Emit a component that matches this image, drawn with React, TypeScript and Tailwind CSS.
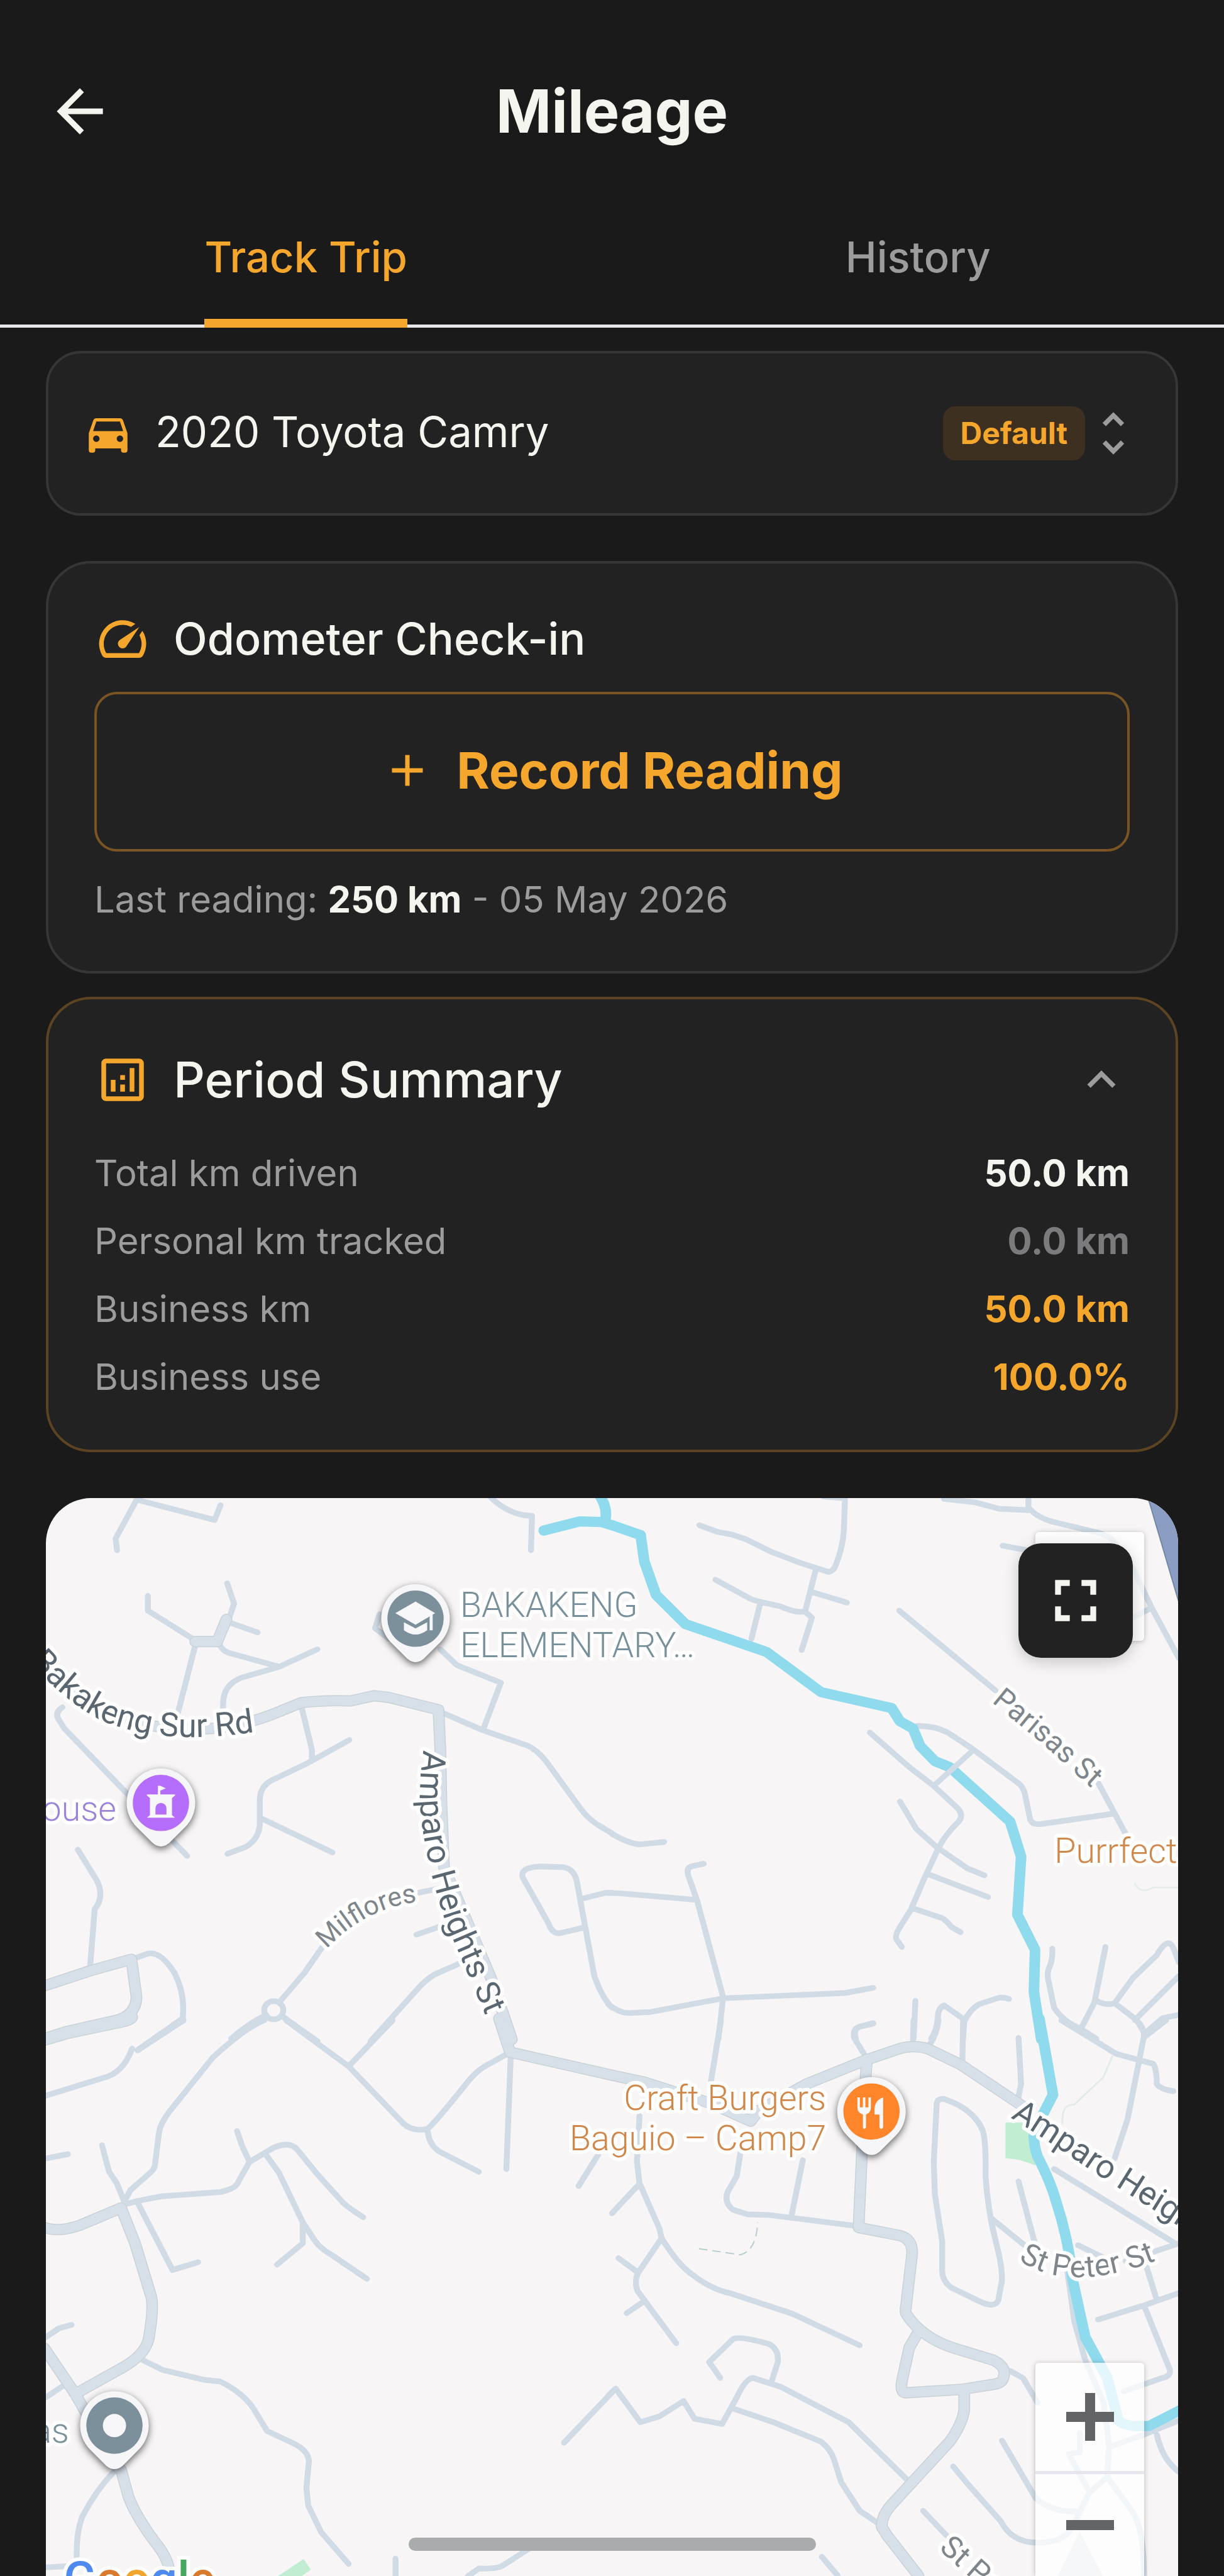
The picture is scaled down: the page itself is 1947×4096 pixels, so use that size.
import { useState } from "react";
import {
  MdAdd,
  MdArrowBack,
  MdDirectionsCar,
  MdFullscreen,
  MdKeyboardArrowDown,
  MdKeyboardArrowUp,
  MdOutlineAnalytics,
  MdSpeed,
  MdUnfoldMore,
} from "react-icons/md";

type Tile = {
  transform: string;
  minor: string[];
  major: string[];
  route: string[];
};

const tiles: Tile[] = [
  {
    transform: "translate(60 2430) scale(.5995 .574)",
    minor: [
      "M272 35 L215 145 L219 178 M275 35 L485 92 L501 50",
      "M1238 28 Q1290 80 1350 80 L1347 178",
      "M303 308 V350 L430 433 M519 272 L538 330 L525 370 M520 382 L602 412",
      "M500 450 Q510 468 530 472 L655 508",
      "M765 460 L660 510 L560 540 Q508 560 508 615 V650 M433 445 L385 640",
      "M70 625 Q48 640 60 660 L75 685 L410 1048",
      "M112 1030 L165 1120 Q185 1165 158 1200 L145 1370",
      "M265 1340 L300 1327 Q335 1315 375 1380 Q405 1440 398 1510 L275 1600",
      "M722 625 L750 745 V775 M852 718 L740 783 L650 828 Q608 845 608 890 V960 Q605 1000 570 1022 L520 1042",
      "M610 940 L806 1038 M935 360 L922 400 L960 430",
      "M1100 460 L1145 505 L1265 555 L1218 685",
      "M1105 640 L1215 690 L1340 735 Q1370 750 1400 795 L1480 910 Q1500 940 1530 960 L1570 985",
      "M1030 1155 L1100 1140 M1035 1272 L1110 1245 M1150 1355 L1085 1385 Q1060 1400 1035 1430 L910 1575",
      "M780 1305 L730 1380 L665 1460 M672 1487 A26 26 0 1 1 620 1487 A26 26 0 1 1 672 1487",
      "M625 1500 Q570 1530 530 1568 M670 1505 L765 1575",
      "M1375 1078 L1435 1080 Q1465 1085 1472 1120 L1495 1250 L1520 1390 Q1540 1450 1568 1480",
      "M1375 1078 Q1315 1080 1325 1110 L1395 1240 Q1405 1270 1425 1268 L1490 1252 M1485 1170 L1550 1153 H1568",
    ],
    major: [
      "M40 505 Q100 570 150 620 Q300 700 480 685 Q560 680 655 640 L720 612 Q790 604 855 607 L920 592 L960 597 L1095 632 L1100 745 L1103 900 L1110 1080 L1240 1400 L1295 1570",
      "M432 438 H492 L517 375",
      "M20 1418 L145 1375 L258 1342 L272 1450 Q270 1500 220 1515 L80 1548 L20 1568",
    ],
    route: ["M1382 122 L1480 96 L1540 98 L1568 107 M1530 15 Q1560 60 1548 98"],
  },
  {
    transform: "translate(1000 2430) scale(.5995 .574)",
    minor: [
      "M238 107 L285 125 L325 133 L365 147 L435 183 L510 213 L590 240 Q600 240 608 225 Q630 170 632 120 L635 30 L575 25",
      "M282 262 L375 315 Q390 322 405 325 L460 338 Q500 358 525 352 L545 370 L517 462",
      "M405 325 L380 430 M555 235 L527 350 M545 297 L640 327",
      "M905 32 L990 42 L1055 60 L1135 64 V30 M1140 62 Q1160 85 1200 97 L1325 128 Q1350 135 1365 150 L1420 230 L1470 340 L1545 485",
      "M1065 165 L1130 178 M1420 370 L1465 345 M783 350 L1045 577 M1320 830 L1400 985",
      "M832 678 Q880 678 915 697 L985 745 L1110 843 Q1120 852 1125 870 L1140 945 Q1145 960 1170 957 L1365 928",
      "M703 697 L810 795 L875 847 L940 910 Q960 930 945 950 Q910 985 890 1025 L850 1115 L815 1200 L785 1250 Q770 1275 775 1285 L790 1307",
      "M785 893 L830 972 L885 1023 L968 1083 L1015 1103",
      "M862 1100 L1025 1165 M820 1197 L900 1225 Q915 1235 925 1250 L950 1265",
      "M0 985 Q50 1015 78 1015 L142 1008",
      "M250 1070 L215 1078 Q200 1085 210 1110 L232 1175 L303 1450 L290 1568 M-10 1153 L30 1155 L230 1173",
      "M-10 1470 Q20 1495 45 1495 L105 1492 L303 1453 L635 1438 L712 1423",
      "M827 1460 L822 1568 M1082 1455 Q1065 1448 1050 1453 L1000 1470 Q975 1485 960 1520 L957 1568",
      "M962 1515 L905 1473 Q888 1480 888 1510 Q885 1545 870 1568 M712 1525 L680 1532 Q655 1540 665 1568",
      "M1200 1312 Q1202 1345 1190 1370 Q1185 1385 1190 1405 L1205 1480 Q1230 1520 1278 1540 L1320 1568",
      "M1345 1307 L1315 1465 L1278 1540 M1320 1460 Q1345 1475 1370 1467 L1420 1395 L1485 1330 Q1515 1275 1530 1310 L1545 1350",
      "M1370 1467 L1430 1515 L1450 1550 M1425 1515 L1545 1390 M1450 1555 L1500 1510 L1545 1500",
    ],
    major: [],
    route: [
      "M0 107 L78 135 L88 210 L120 305 L200 388 L422 468 L570 582 L762 627 L785 665 L820 685 L840 735 L880 778 L920 795 L1085 950 L1115 1050 L1105 1215 L1153 1315 L1150 1435 L1170 1570",
    ],
  },
  {
    transform: "translate(60 3300) scale(.5995 .5784)",
    minor: [
      "M400 0 L275 85 M260 80 Q235 150 180 163 L25 213 M25 390 L85 378 M178 353 L197 427 L218 460 L240 515",
      "M620 0 Q570 20 480 105 L360 260 Q335 295 333 320 L322 410 Q320 420 310 430 L255 480 L235 520",
      "M240 520 L275 510 L340 497 L500 485 Q545 475 550 455 L580 400 L645 360 Q690 340 710 365 L765 435 L835 515 Q850 530 890 556",
      "M546 313 L560 355 L580 400 M625 380 L660 430 L725 570 L760 625 Q775 645 800 660 L900 730 M725 570 V630 L655 690",
      "M275 515 L370 705 L440 683",
      "M680 0 L850 130 L1000 292 Q1025 315 1065 307 Q1085 290 1170 180 Q1200 140 1230 125 L1290 90",
      "M970 0 L850 130 M1065 310 Q1070 355 1100 372 L1205 428 M1292 100 L1280 420 M1530 380 L1477 468",
      "M95 860 L60 870 L25 895 M25 1065 L75 1030",
      "M290 960 L345 988 L455 1015 L500 1020 Q560 1050 590 1095 L628 1160 L700 1195 Q740 1215 742 1245 L735 1320 L740 1370 L775 1445 L850 1535",
      "M210 1275 Q160 1330 125 1400 Q105 1450 110 1540 M20 1545 L110 1540",
      "M978 1520 V1580 M1355 1483 L1270 1540 Q1255 1550 1205 1548 L1175 1570 M1575 1043 L1437 1193",
    ],
    major: [
      "M25 55 L80 38 L230 5 Q255 0 260 -8",
      "M20 585 Q60 600 120 578 L230 530 L268 630 L312 780 Q320 810 305 900 Q295 945 235 980 L105 1055",
      "M20 925 L105 1055 L130 1100 L210 1250 L230 1270 L250 1345 Q270 1400 320 1470 Q360 1520 362 1560",
      "M1260 -5 L1290 90 L1568 155",
    ],
    route: [],
  },
  {
    transform: "translate(1000 3300) scale(.5995 .5784)",
    minor: [
      "M297 0 L270 170 M75 270 L68 400 L75 460 L130 590 L135 615 Q180 690 215 715 Q270 760 320 770 L490 828 L675 918",
      "M0 545 L72 465 M132 620 L70 715 Q60 740 70 765 L175 912 M18 672 L68 710 M85 795 L40 827",
      "M350 375 L340 440 L315 485 Q305 515 330 535 L370 548 L430 550 L660 580 M520 395 L490 548",
      "M712 8 L675 18 Q655 25 660 50 L690 100 M822 0 L820 70 M890 0 Q885 40 865 70 M957 0 L955 120",
      "M905 222 Q985 250 1010 310 Q1020 340 1018 440 Q1025 540 1045 620 Q1070 720 1060 750 L1053 790 Q1045 815 1000 793 L925 755 Q898 735 900 700 V625 L880 490 L877 400 L885 235 Q888 220 905 222",
      "M1035 560 L1130 640 M1108 455 L1155 640 M1108 50 L1115 180 L1105 230",
      "M1225 0 L1375 95 L1475 123 Q1485 140 1485 180 Q1495 195 1530 200 M1280 20 L1290 0",
      "M1430 0 Q1450 20 1450 45 L1405 280 L1370 390 M1450 48 L1510 0",
      "M1205 420 L1535 630 M1400 680 L1545 630 M1270 635 L1340 670 M1455 690 L1485 790",
      "M1325 845 L1450 805 L1545 770 M1450 805 L1520 985 Q1525 1005 1500 1010 L1395 1048",
      "M1085 990 L1120 1010 L1160 1080 M1240 700 L1260 850 L1290 960 L1340 1080 L1355 1200 L1350 1290",
      "M1355 1205 L1450 1170 L1545 1130 M1485 1170 Q1500 1240 1545 1275",
      "M1275 1165 V1220 L1245 1225 L1300 1330 M1350 1290 L1300 1335 L1260 1420 M1350 1290 L1420 1390 Q1450 1440 1450 1568",
      "M1063 1187 L1155 1350 Q1200 1390 1270 1387 M930 1260 L970 1310 L1060 1415 Q1090 1475 1160 1475 Q1240 1475 1260 1420",
      "M848 1385 L912 1455 M572 1515 L615 1568",
      "M295 1010 L265 965 L330 900 Q350 890 430 915 Q455 930 452 965 L435 1020",
      "M-10 1060 L10 1040 L77 1135 L130 1118 L195 1075 L225 1125 L300 1140 L340 1065 Q365 1010 385 1010 L460 1035 L645 1135 L805 1298",
      "M335 1098 L440 1135 L570 1190 Q595 1210 605 1240 L625 1305 L675 1385 L725 1420",
    ],
    major: [
      "M0 155 L90 175 L270 235 L378 285 L400 255 L530 180 L690 113 L790 78 Q830 70 860 80 L950 125 L1130 250",
      "M695 110 L690 180 L672 585 L785 608 Q820 618 818 660 L800 820 Q798 830 830 865 Q870 905 930 925 L1040 960 Q1080 980 1065 1015 Q1060 1025 1040 1028 L955 1042 L800 1052 Q785 1050 790 1020 L810 925 L835 880",
      "M960 1045 V1100 Q955 1140 920 1190 L760 1370 Q735 1400 735 1430 L750 1455 L835 1568",
    ],
    route: [
      "M1165 -5 L1178 70 L1202 210 L1150 315 Q1148 350 1160 385 Q1195 455 1210 510 Q1245 620 1255 730 Q1270 800 1290 895 L1350 1010 L1380 1130 Q1400 1150 1465 1145 L1550 1100",
    ],
  },
];

const streets = [
  { id: "bakakeng", name: "Bakakeng Sur Rd", d: "M30 2694 Q105 2782 170 2812 Q270 2852 416 2829", size: 54, color: "#5b6770", end: true },
  { id: "amparo-n", name: "Amparo Heights St", d: "M692 2858 Q682 2930 689 2975 Q698 3050 729 3142 L810 3330", size: 54, color: "#5b6770" },
  { id: "milflores", name: "Milflores", d: "M534 3184 Q590 3122 672 3108 L760 3092", size: 44, color: "#7f868b" },
  { id: "parisas", name: "Parisas St", d: "M1620 2780 L1703 2848 L1860 2990", size: 48, color: "#7f868b" },
  { id: "amparo-s", name: "Amparo Heights St", d: "M1651 3459 Q1716 3499 1788 3549 L1887 3611 L2160 3790", size: 54, color: "#5b6770" },
  { id: "peter", name: "St Peter St", d: "M1664 3691 Q1750 3752 1910 3684", size: 50, color: "#7f868b" },
  { id: "peter-s", name: "St Peter St", d: "M1533 4164 L1800 4400", size: 50, color: "#7f868b" },
];

const places = [
  { name: "BAKAKENG", x: 752, y: 2641, color: "#78909c" },
  { name: "ELEMENTARY…", x: 752, y: 2707, color: "#78909c" },
  { name: "ouse", x: 190, y: 2974, color: "#9b84d8", end: true },
  { name: "Craft Burgers", x: 1350, y: 3446, color: "#d0874a", end: true },
  { name: "Baguio – Camp7", x: 1350, y: 3512, color: "#d0874a", end: true },
  { name: "Purrfect", x: 1723, y: 3043, color: "#d0874a" },
  { name: "as", x: 113, y: 3990, color: "#78909c", end: true },
];

const summary = [
  { label: "Total km driven", value: "50.0 km", color: "text-[#f5f5f0]" },
  { label: "Personal km tracked", value: "0.0 km", color: "text-[#7b7b7d]" },
  { label: "Business km", value: "50.0 km", color: "text-[#f5a62c]" },
  { label: "Business use", value: "100.0%", color: "text-[#f5a62c]" },
];

function Pin({ x, y, color, children }: { x: number; y: number; color: string; children: React.ReactNode }) {
  return (
    <g transform={`translate(${x} ${y})`}>
      <path
        d="M-40 39 A56 56 0 1 1 40 39 L14 65 Q0 77 -14 65 Z"
        fill="#f6f6f8"
        className="drop-shadow-[0_4px_6px_rgba(0,0,0,0.6)]"
      />
      <circle r="46" fill={color} />
      <g fill="#f7f6f8">{children}</g>
    </g>
  );
}

function TripMap() {
  return (
    <svg
      viewBox="75 2447 1850 1761"
      className="block w-full bg-[#f7f5f6] font-[Roboto,sans-serif]"
      role="img"
      aria-label="Map"
    >
      <path d="M1874 2440 H1930 V2630 Z" fill="#8b9dc3" stroke="#7288a0" strokeWidth="2" />
      <path d="M1643 3467 H1682 L1692 3537 L1665 3528 L1643 3525 Z" fill="#c1eed3" />
      <path d="M454 4208 L496 4180 L508 4197 L490 4210 Z" fill="#c1eed3" />
      <path d="M1854 3075 Q1860 3095 1885 3083 H1930" fill="none" stroke="#e6edea" strokeWidth="3" />
      <path d="M1736 3470 Q1734 3436 1755 3438 L1773 3421 L1803 3393 L1818 3358" fill="none" stroke="#e3ebe8" strokeWidth="3" />
      <path
        d="M1142 3673 L1210 3683 Q1236 3676 1238 3630"
        fill="none"
        stroke="#b7cdcf"
        strokeWidth="2"
        strokeDasharray="14 8"
      />
      <path d="M1764 4135 L1725 4215 H1806 Z" fill="#dcdfe6" />

      <g fill="none" strokeLinecap="round" strokeLinejoin="round">
        {tiles.map((t) => (
          <g key={t.transform} transform={t.transform}>
            <path d={t.minor.join(" ")} stroke="#d0dbe5" strokeWidth="16" />
          </g>
        ))}
        {tiles.map((t) => (
          <g key={t.transform} transform={t.transform}>
            <path d={t.major.join(" ")} stroke="#c8d2d7" strokeWidth="32" />
          </g>
        ))}
        {tiles.map((t) => (
          <g key={t.transform} transform={t.transform}>
            <path d={t.major.join(" ")} stroke="#d7dfe9" strokeWidth="27" />
          </g>
        ))}
        {tiles.map((t) => (
          <g key={t.transform} transform={t.transform}>
            <path d={t.route.join(" ")} stroke="#8fdaed" strokeWidth="29" />
          </g>
        ))}
        <path d="M1590 2859 L1528 2915" stroke="#d0dbe5" strokeWidth="9" />
      </g>

      <g stroke="#fff" strokeWidth="12" strokeLinejoin="round" paintOrder="stroke">
        {streets.map((s) => (
          <g key={s.id} fontSize={s.size}>
            <path id={s.id} d={s.d} fill="none" stroke="none" />
            <text fill={s.color} textAnchor={s.end ? "end" : "start"}>
              <textPath href={`#${s.id}`} startOffset={s.end ? "100%" : "0"}>
                {s.name}
              </textPath>
            </text>
          </g>
        ))}
      </g>
      <g fontSize="57" fontWeight="300" stroke="#fff" strokeWidth="12" strokeLinejoin="round" paintOrder="stroke">
        {places.map((p) => (
          <text key={p.name} x={p.x} y={p.y} fill={p.color} textAnchor={p.end ? "end" : "start"}>
            {p.name}
          </text>
        ))}
      </g>

      <Pin x={679} y={2644} color="#7b909b">
        <path d="M0 -28 L32 -9 L0 10 L-33 -9 Z M-19 6 L0 16 L19 6 V19 Q0 33 -19 19 Z M23 -9 H28 V19 H23 Z" />
      </Pin>
      <Pin x={263} y={2945} color="#b56dfc">
        <path d="M-5 -28 H-1 L8 -24 L-1 -20 V-14 H23 V-12 L18 -8 V20 L23 24 H-23 L-18 20 V-8 L-23 -12 V-14 H-5 Z" />
        <path d="M-9 19 V9 A9 9 0 0 1 9 9 V19 Z" fill="#b56dfc" />
      </Pin>
      <Pin x={1424} y={3449} color="#ff852a">
        <path d="M-23 -23 H-19 V-7 H-14 V-23 H-10 V-7 H-5 V-23 H-1 V-6 Q-1 2 -9 5 V26 Q-12 31 -14 26 V5 Q-23 2 -23 -6 Z" />
        <path d="M19 -23 Q5 -18 5 -3 V5 H13 V26 Q16 31 19 26 Z" />
      </Pin>
      <Pin x={187} y={3962} color="#7b909b">
        <circle r="19" />
      </Pin>

      <text x="104" y="4240" fontSize="78" fontWeight="500" stroke="#fff" strokeWidth="12" paintOrder="stroke">
        <tspan fill="#4f8af0">G</tspan>
        <tspan fill="#d97b2f">o</tspan>
        <tspan fill="#f2a52c">o</tspan>
        <tspan fill="#4f8af0">g</tspan>
        <tspan fill="#47a85d">l</tspan>
        <tspan fill="#d97b2f">e</tspan>
      </text>
    </svg>
  );
}

export default function App() {
  const [tab, setTab] = useState("track");
  const [open, setOpen] = useState(true);

  const tabClass = (active: boolean) =>
    active
      ? "border-b-[14px] border-[#f5a62c] pb-[58px] leading-20 text-[#f5a62c]"
      : "border-b-[14px] border-transparent pb-[58px] leading-20 text-[#9c9c9c]";

  return (
    <div className="relative min-h-screen overflow-hidden bg-[#1a1a1a] font-[Inter,sans-serif] text-[#f5f5f0]">
      <header className="grid grid-cols-[1fr_auto_1fr] items-center px-[72px] pt-28">
        <button type="button" aria-label="Back">
          <MdArrowBack className="size-[110px]" />
        </button>
        <h1 className="text-[95px] leading-[130px] font-bold">Mileage</h1>
      </header>

      <nav className="flex pt-[127px] text-[67px] font-medium shadow-[inset_0_-5px_0_#ebe7ee]">
        <button type="button" className="flex flex-1 justify-center" onClick={() => setTab("track")}>
          <span className={tabClass(tab === "track")}>Track Trip</span>
        </button>
        <button type="button" className="flex flex-1 justify-center" onClick={() => setTab("history")}>
          <span className={tabClass(tab === "history")}>History</span>
        </button>
      </nav>

      <main className="px-[73px] pt-[37px]">
        <section className="flex h-[262px] items-center rounded-[56px] border-4 border-[#363636] bg-[#222] pr-[54px] pl-[54px]">
          <MdDirectionsCar className="size-[82px] text-[#f5a62c]" />
          <select
            aria-label="Vehicle"
            className="ml-[34px] min-w-0 flex-1 appearance-none bg-transparent pb-1 text-[67px] leading-20"
          >
            <option>2020 Toyota Camry</option>
          </select>
          <span className="rounded-[20px] bg-[#3e3020] px-[28px] py-[13px] text-[48px] leading-[60px] font-bold text-[#f5a62c]">
            Default
          </span>
          <MdUnfoldMore className="size-[90px] text-[#9c9c9c]" />
        </section>

        <section className="mt-[72px] rounded-[72px] border-4 border-[#363636] bg-[#222] px-[73px] pt-[75px] pb-[78px]">
          <h2 className="flex items-center gap-[36px] text-[70px] leading-[90px] font-medium">
            <MdSpeed className="size-[90px] text-[#f5a62c]" />
            Odometer Check-in
          </h2>
          <button
            type="button"
            className="mt-[39px] flex h-[254px] w-full items-center justify-center gap-[36px] rounded-[36px] border-4 border-[#7a5523] pb-1 text-[80px] font-bold text-[#f5a62c]"
          >
            <MdAdd className="size-[84px]" />
            Record Reading
          </button>
          <p className="mt-[40px] text-[58px] leading-[72px] text-[#9c9c9c]">
            Last reading: <b className="font-bold text-[#f5f5f0]">250 km</b> - 05 May 2026
          </p>
        </section>

        <section className="mt-[37px] rounded-[72px] border-4 border-[#5c4422] bg-[#222] px-[73px] pt-[83px] pb-[60px]">
          <h2 className="flex items-center gap-[36px] text-[78px] leading-[90px] font-medium">
            <MdOutlineAnalytics className="size-[90px] text-[#f5a62c]" />
            Period Summary
            <button type="button" aria-label="Toggle summary" className="ml-auto" onClick={() => setOpen(!open)}>
              {open ? (
                <MdKeyboardArrowUp className="size-[90px] text-[#9c9c9c]" />
              ) : (
                <MdKeyboardArrowDown className="size-[90px] text-[#9c9c9c]" />
              )}
            </button>
          </h2>
          {open && (
            <dl className="mt-[51px]">
              {summary.map((row) => (
                <div key={row.label} className="flex h-[108px] items-center justify-between pb-1 text-[58px]">
                  <dt className="text-[#9c9c9c]">{row.label}</dt>
                  <dd className={`font-bold ${row.color}`}>{row.value}</dd>
                </div>
              ))}
            </dl>
          )}
        </section>

        <section className="relative mt-[73px] overflow-hidden rounded-t-[72px]">
          <TripMap />
          <div className="absolute top-[54px] right-[54px] size-[173px] rounded-md bg-white/75 shadow-[0_1px_8px_rgba(0,0,0,0.25)]" />
          <button
            type="button"
            aria-label="Full screen"
            className="absolute top-[72px] right-[72px] flex size-[182px] items-center justify-center rounded-[36px] bg-[#222] shadow-[0_6px_24px_rgba(0,0,0,0.2)]"
          >
            <MdFullscreen className="size-[112px]" />
          </button>
          <div className="absolute right-[54px] bottom-0 w-[173px] rounded-t-md bg-white/75 text-[#636466] shadow-[0_1px_8px_rgba(0,0,0,0.25)]">
            <button
              type="button"
              aria-label="Zoom in"
              className="flex h-[177px] w-full items-center justify-center border-b-5 border-[#e6e6ec]"
            >
              <svg viewBox="0 0 76 76" className="size-[76px]" fill="currentColor">
                <path d="M30 0 H46 V30 H76 V46 H46 V76 H30 V46 H0 V30 H30 Z" />
              </svg>
            </button>
            <button type="button" aria-label="Zoom out" className="flex h-[162px] w-full items-center justify-center">
              <svg viewBox="0 0 76 76" className="size-[76px]" fill="currentColor">
                <path d="M0 30 H76 V46 H0 Z" />
              </svg>
            </button>
          </div>
        </section>
      </main>

      <div className="absolute bottom-[40px] left-1/2 h-[21px] w-[648px] -translate-x-1/2 rounded-full bg-[#a9abac]" />
    </div>
  );
}
